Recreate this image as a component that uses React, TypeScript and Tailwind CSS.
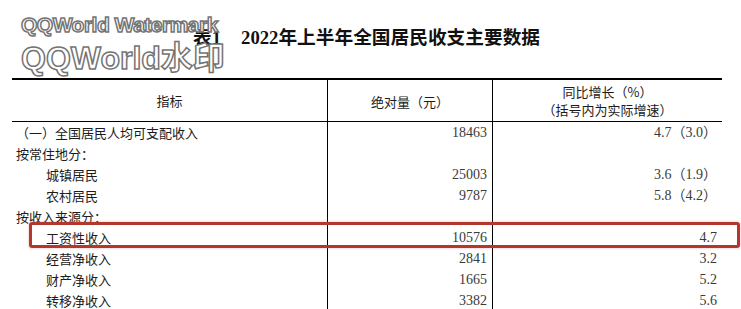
import React from 'react';

const zhongwen = "font-['Noto_Sans_CJK_SC','Noto_Sans',sans-serif]";
const shuzi = "font-['Liberation_Serif','Noto_Sans_CJK_SC',serif]";

const linhas = [
  { nome: '（一）全国居民人均可支配收入', valor: '18463', taxa: '4.7（3.0）', recuo: false },
  { nome: '按常住地分：', valor: '', taxa: '', recuo: false },
  { nome: '城镇居民', valor: '25003', taxa: '3.6（1.9）', recuo: true },
  { nome: '农村居民', valor: '9787', taxa: '5.8（4.2）', recuo: true },
  { nome: '按收入来源分：', valor: '', taxa: '', recuo: false },
  { nome: '工资性收入', valor: '10576', taxa: '4.7', recuo: true },
  { nome: '经营净收入', valor: '2841', taxa: '3.2', recuo: true },
  { nome: '财产净收入', valor: '1665', taxa: '5.2', recuo: true },
  { nome: '转移净收入', valor: '3382', taxa: '5.6', recuo: true },
];

function App() {
  return (
    <div className="relative w-[741px] h-[309px] overflow-hidden bg-white text-[#1c1c1c]">
      {/* --- TITULO --- */}
      <div className={`h-[78px] pt-[26px] pl-[193px] flex items-start text-[18.7px] leading-[24px] font-bold text-[#111] ${shuzi}`}>
        <span>表1</span>
        <span className="ml-[20px]">2022年上半年全国居民收支主要数据</span>
      </div>

      {/* --- TABELA --- */}
      <div className="ml-[12px] w-[710px] border-t-2 border-black">
        <div className={`grid grid-cols-[315px_165px_230px] h-[42px] border-b border-black text-[13px] ${zhongwen}`}>
          <div className="flex items-center justify-center">指标</div>
          <div className="flex items-center justify-center border-l border-black pt-[2px]">绝对量（元）</div>
          <div className="flex flex-col items-center justify-center border-l border-black leading-[18px]">
            <span>同比增长（%）</span>
            <span>（括号内为实际增速）</span>
          </div>
        </div>

        {linhas.map((linha, i) => (
          <div key={i} className="grid grid-cols-[315px_165px_230px] h-[21px]">
            <div className={`flex items-center text-[13px] ${zhongwen} ${linha.recuo ? 'pl-[34px]' : 'pl-[4px]'}`}>
              {linha.nome}
            </div>
            <div className={`flex items-center justify-end border-l border-black pr-[5px] text-[14px] text-[#3a3a3a] ${shuzi}`}>
              {linha.valor}
            </div>
            <div className={`flex items-center justify-end border-l border-black pr-[5px] text-[14px] text-[#3a3a3a] ${shuzi}`}>
              {linha.taxa}
            </div>
          </div>
        ))}
      </div>

      {/* --- DESTAQUE --- */}
      <div className="absolute left-[29px] top-[222px] w-[711px] h-[26px] border-[3px] border-[#b3372c] rounded-[3px] shadow-[0_0_3px_rgba(179,55,44,0.35)]" />

      {/* --- MARCA D'AGUA --- */}
      <div className="absolute left-[21px] top-[14px] font-['Liberation_Sans',sans-serif] font-bold text-white [-webkit-text-stroke:1.5px_#747474] leading-none">
        <div className="text-[21px] tracking-[-0.5px]">QQWorld Watermark</div>
        <div className="text-[32px] mt-[7px] font-['Liberation_Sans','Noto_Sans_CJK_SC',sans-serif]">QQWorld水印</div>
      </div>
    </div>
  );
}

export default App;
